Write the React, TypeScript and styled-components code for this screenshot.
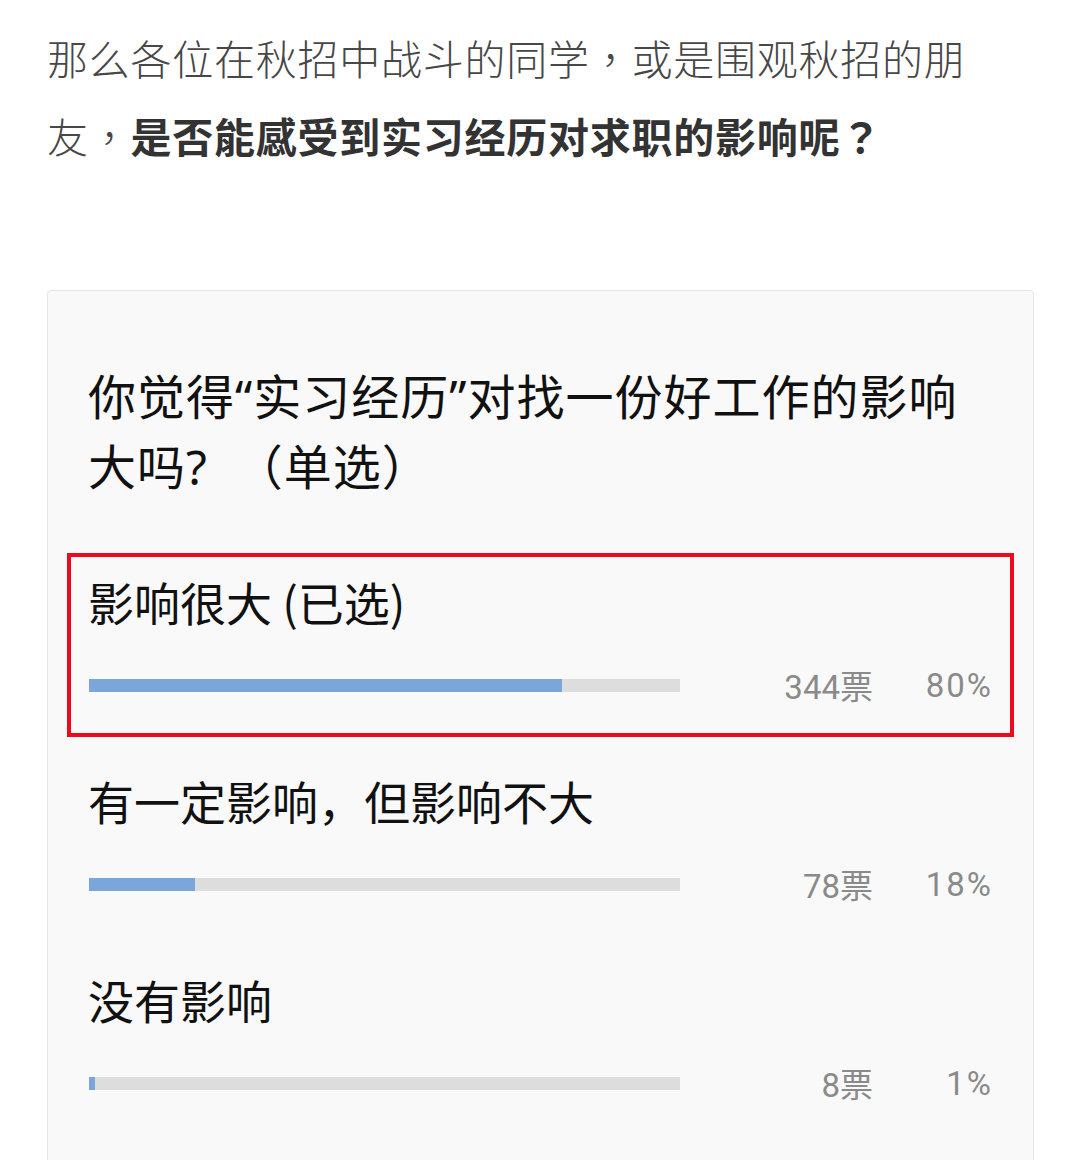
import React from "react";
import styled, { createGlobalStyle } from "styled-components";

type OptionData = {
    label: string;
    votes: number;
    percent: number;
    picked?: boolean;
}

const options: OptionData[] = [
    { label: "影响很大 (已选)", votes: 344, percent: 80, picked: true },
    { label: "有一定影响，但影响不大", votes: 78, percent: 18 },
    { label: "没有影响", votes: 8, percent: 1 },
];

const GlobalStyle = createGlobalStyle`
    html, body {
        margin: 0;
        padding: 0;
        background: #ffffff;
    }
    body {
        font-family: "Noto Sans CJK SC", "Noto Sans", sans-serif;
    }
`

const Page = styled.div`
    padding: 18px 46px 0 47px;
    width: 1080px;
    box-sizing: border-box;
    height: 1160px;
    overflow: hidden;
`

// the intro uses centred punctuation, as the TC cut of Noto draws it
const Intro = styled.p`
    margin: 0;
    font-family: "Noto Sans CJK TC", "Noto Sans CJK SC", sans-serif;
    font-size: 41px;
    font-weight: 300;
    letter-spacing: 0.75px;
    line-height: 78px;
    color: #474747;
`

const Strong = styled.strong`
    font-weight: 700;
    color: #333333;
`

const Card = styled.div`
    margin-top: 116px;
    background: #f9f9f9;
    border: 1px solid #e6e6e6;
    border-radius: 4px;
    padding: 71px 40px 80px;
`

const Question = styled.h2`
    margin: 0 0 51px;
    font-family: "Noto Sans", "Noto Sans CJK SC", sans-serif;
    font-size: 48px;
    font-weight: 400;
    letter-spacing: 1px;
    line-height: 70px;
    color: #111111;
`

const OptionList = styled.div`
    display: flex;
    flex-direction: column;
    gap: 15px;
`

const Option = styled.div<{ $picked?: boolean }>`
    margin: 0 -21px;
    padding: 14px 17px 28px;
    border: 4px solid ${(p) => (p.$picked ? "#ee0a1e" : "transparent")};
`

const Label = styled.div`
    font-size: 46px;
    line-height: 60px;
    color: #111111;
`

const ResultRow = styled.div`
    margin-top: 34px;
    height: 40px;
    display: flex;
    align-items: center;
`

const Track = styled.div`
    width: 591px;
    height: 13px;
    margin-left: 1px;
    background: #dddddd;
    flex-shrink: 0;
`

const Fill = styled.div`
    height: 100%;
    background: #7aa6dc;
`

const Stat = styled.span`
    font-family: Roboto, "Noto Sans CJK SC", sans-serif;
    font-size: 33px;
    color: #8a8a8a;
    text-align: right;
`

const Votes = styled(Stat)`
    flex: 1;
`

const Percent = styled(Stat)`
    width: 120px;
    letter-spacing: 2px;
`

const App: React.FC<{}> = () => {
    return (
        <Page>
            <GlobalStyle />
            <Intro>
                那么各位在秋招中战斗的同学，或是围观秋招的朋友，<Strong>是否能感受到实习经历对求职的影响呢？</Strong>
            </Intro>
            <Card>
                <Question>你觉得“实习经历”对找一份好工作的影响大吗?{"\u00a0 "}（单选）</Question>
                <OptionList>
                    {options.map((o) => (
                        <Option key={o.label} $picked={o.picked}>
                            <Label>{o.label}</Label>
                            <ResultRow>
                                <Track>
                                    <Fill style={{ width: `${o.percent}%` }} />
                                </Track>
                                <Votes>{o.votes}票</Votes>
                                <Percent>{o.percent}%</Percent>
                            </ResultRow>
                        </Option>
                    ))}
                </OptionList>
            </Card>
        </Page>
    )
}

export default App;
